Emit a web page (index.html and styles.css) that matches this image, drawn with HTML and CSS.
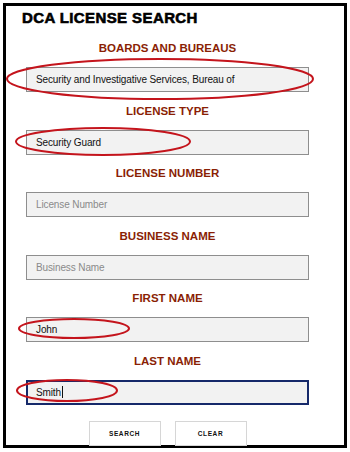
FILE: index.html
```html
<!DOCTYPE html>
<html>
<head>
<meta charset="utf-8">
<link rel="stylesheet" href="styles.css">
</head>
<body>
<div class="frame">
  <h1 class="title">DCA LICENSE SEARCH</h1>
  <div class="form">
    <div class="group">
      <div class="label">BOARDS AND BUREAUS</div>
      <div class="field">Security and Investigative Services, Bureau of</div>
    </div>
    <div class="group">
      <div class="label">LICENSE TYPE</div>
      <div class="field">Security Guard</div>
    </div>
    <div class="group">
      <div class="label">LICENSE NUMBER</div>
      <div class="field placeholder">License Number</div>
    </div>
    <div class="group">
      <div class="label">BUSINESS NAME</div>
      <div class="field placeholder">Business Name</div>
    </div>
    <div class="group">
      <div class="label">FIRST NAME</div>
      <div class="field">John</div>
    </div>
    <div class="group">
      <div class="label">LAST NAME</div>
      <div class="field focused">Smith<span class="caret"></span></div>
    </div>
    <div class="buttons">
      <div class="btn">SEARCH</div>
      <div class="btn">CLEAR</div>
    </div>
  </div>
</div>
<svg class="marks" width="350" height="452" viewBox="0 0 350 452">
  <ellipse cx="160" cy="79" rx="153" ry="20" />
  <ellipse cx="103" cy="141.5" rx="87" ry="13.5" />
  <ellipse cx="74" cy="328.5" rx="55" ry="9.5" />
  <ellipse cx="67" cy="390.5" rx="50" ry="10.5" />
</svg>
</body>
</html>
```
FILE: styles.css
```css
html, body {
  margin: 0;
  padding: 0;
  background: #ffffff;
}
body {
  width: 350px;
  height: 452px;
  position: relative;
  font-family: "Liberation Sans", Arial, sans-serif;
}
.frame {
  margin: 3px 0 0 3px;
  width: 344px;
  height: 445px;
  box-sizing: border-box;
  border: 3px solid #000;
  padding: 3px 0 0 0;
}
.title {
  margin: 0 0 0 16px;
  font-size: 15px;
  line-height: 18px;
  font-weight: 700;
  letter-spacing: 0.4px;
  color: #000;
  -webkit-text-stroke: 0.6px #000;
}
.form {
  margin: 14px 0 0 20px;
  width: 283px;
  display: flex;
  flex-direction: column;
}
.group {
  display: flex;
  flex-direction: column;
  margin-bottom: 11.5px;
}
.label {
  text-align: center;
  font-size: 11.5px;
  line-height: 14px;
  font-weight: 700;
  color: #8a1f05;
  margin-bottom: 12px;
}
.field {
  height: 25px;
  box-sizing: border-box;
  border: 1px solid #8e8e8e;
  background: #f2f2f2;
  font-size: 10px;
  letter-spacing: -0.12px;
  line-height: 23px;
  padding-left: 9px;
  color: #111;
  display: flex;
  align-items: center;
}
.placeholder {
  color: #8a8a8a;
}
.focused {
  border: 2px solid #16296a;
  padding-left: 8px;
}
.caret {
  display: inline-block;
  width: 1px;
  height: 12px;
  background: #111;
  margin-left: 1px;
}
.buttons {
  display: flex;
  justify-content: center;
  gap: 14px;
  margin-top: 4.5px;
}
.btn {
  width: 72px;
  height: 25px;
  box-sizing: border-box;
  border: 1px solid #d6d6d6;
  background: #fff;
  display: flex;
  align-items: center;
  justify-content: center;
  font-size: 6.5px;
  font-weight: 700;
  letter-spacing: 0.6px;
  color: #111;
}
.marks {
  position: absolute;
  left: 0;
  top: 0;
  pointer-events: none;
}
.marks ellipse {
  fill: none;
  stroke: #c4141c;
  stroke-width: 2;
}
```
